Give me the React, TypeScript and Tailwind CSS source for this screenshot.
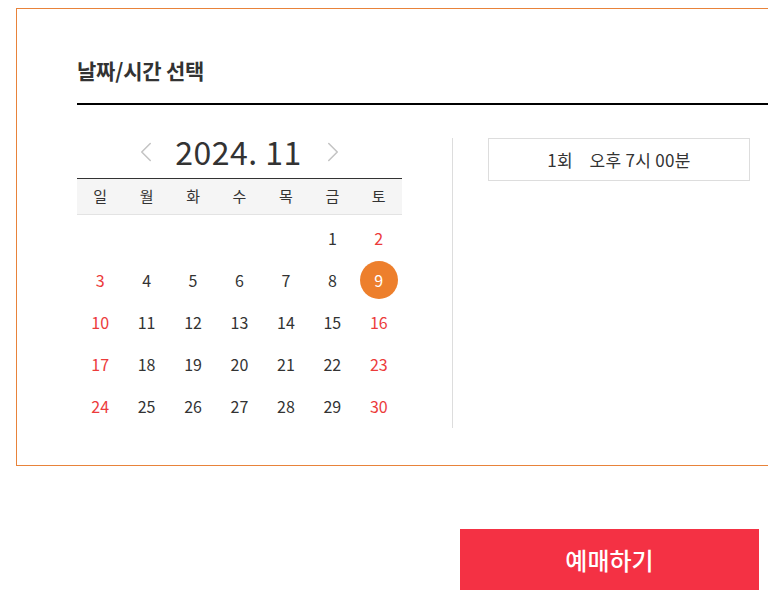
import { ChevronLeft, ChevronRight } from 'lucide-react';
import clsx from 'clsx';

const WEEKDAYS = ['일', '월', '화', '수', '목', '금', '토'];

// November 2024 starts on Friday
const weeks: (number | null)[][] = [
  [null, null, null, null, null, 1, 2],
  [3, 4, 5, 6, 7, 8, 9],
  [10, 11, 12, 13, 14, 15, 16],
  [17, 18, 19, 20, 21, 22, 23],
  [24, 25, 26, 27, 28, 29, 30],
];

const selected = 9;

export default function App() {
  return (
    <div
      className="w-[768px] h-[604px] overflow-hidden bg-white pt-[8px] pl-[16px] text-[#333]"
      style={{ fontFamily: '"Noto Sans CJK KR", "Noto Sans", sans-serif' }}
    >
      <div className="w-[800px] h-[458px] border border-[#e8833a] pl-[60px]">
        <div className="pt-[47px] pb-[19px] border-b-2 border-black">
          <h2 className="text-[21px] leading-[28px] font-bold tracking-[-0.2px] text-[#333]">날짜/시간 선택</h2>
        </div>

        <div className="flex mt-[33px]">
          {/* Calendar */}
          <div className="w-[325px]">
            <div className="h-[40px] flex justify-center items-start">
              <button className="h-[28px] flex items-center text-[#c4c4c4] mr-[12px]">
                <ChevronLeft size={34} strokeWidth={1.1} />
              </button>
              <span className="text-[32px] leading-[26px] text-[#333] tracking-[0.5px]">2024. 11</span>
              <button className="h-[28px] flex items-center text-[#c4c4c4] ml-[14px]">
                <ChevronRight size={34} strokeWidth={1.1} />
              </button>
            </div>
            <div className="grid grid-cols-7 h-[37px] items-center bg-[#f5f5f5] border-t border-[#333] border-b border-b-[#e3e3e3]">
              {WEEKDAYS.map((d) => (
                <div key={d} className="text-center text-[15px] text-[#333]">
                  {d}
                </div>
              ))}
            </div>
            <div className="mt-[2px]">
              {weeks.map((week, wi) => (
                <div key={wi} className="grid grid-cols-7 h-[42px]">
                  {week.map((day, di) => (
                    <div key={di} className="flex items-center justify-center">
                      {day !== null && (
                        <span
                          className={clsx(
                            'w-[38px] h-[38px] rounded-full flex items-center justify-center text-[16px]',
                            day === selected
                              ? 'bg-[#ed7f2c] text-white'
                              : di === 0 || di === 6
                                ? 'text-[#ec3b3b]'
                                : 'text-[#333]'
                          )}
                        >
                          {day}
                        </span>
                      )}
                    </div>
                  ))}
                </div>
              ))}
            </div>
          </div>

          {/* Divider */}
          <div className="w-px h-[290px] bg-[#ddd] ml-[50px]" />

          {/* Times */}
          <div className="ml-[35px]">
            <div className="w-[262px] h-[43px] border border-[#ddd] flex items-center justify-center text-[17px] text-[#333] tracking-[0.3px]">
              1회&nbsp;&nbsp;&nbsp;&nbsp;오후 7시 00분
            </div>
          </div>
        </div>
      </div>

      <div className="flex pl-[444px] mt-[63px]">
        <button className="w-[299px] h-[61px] bg-[#f43144] text-white text-[24px] font-medium">예매하기</button>
      </div>
    </div>
  );
}
